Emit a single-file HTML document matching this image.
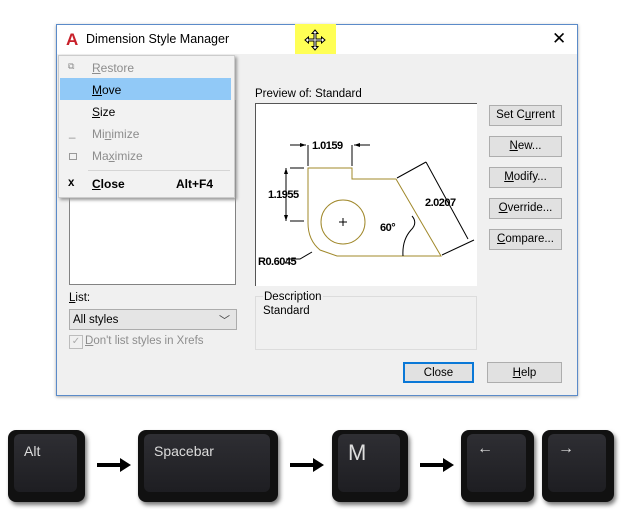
<!DOCTYPE html>
<html><head><style>
body{margin:0;width:624px;height:515px;background:#fff;position:relative;overflow:hidden;font-family:"Liberation Sans",sans-serif;font-size:11.5px;color:#000}
.a{position:absolute}
.btn{position:absolute;background:#e1e1e1;border:1px solid #adadad;text-align:center;line-height:19px;font-size:11.5px;box-sizing:border-box;height:21px}
.mi{position:absolute;left:92px;font-size:12px}
.g{color:#8d8d8d}
.key{position:absolute;background:#111;border-radius:8px;box-shadow:2px 3px 4px #777}
.key .in{position:absolute;left:6px;top:4px;right:8px;bottom:10px;background:linear-gradient(#2e2e33,#1e1e22);border-radius:6px;color:#ddd;font-size:14px;padding:9px 0 0 10px;box-sizing:border-box}
</style></head><body>
<div class="a" style="left:56px;top:24px;width:520px;height:370px;border:1px solid #5b8bc9;background:#f0f0f0;box-shadow:0 1px 3px #aaa"></div>
<div class="a" style="left:57px;top:25px;width:520px;height:29px;background:#fff"></div>
<div class="a" style="left:66px;top:31px;color:#c8202a;font-weight:bold;font-size:17px;line-height:17px">A</div>
<div class="a" style="left:86px;top:32px;font-size:12.5px">Dimension Style Manager</div>
<div class="a" style="left:295px;top:24px;width:41px;height:30px;background:#ffff55"></div>
<svg class="a" style="left:303px;top:28px" width="24" height="24" viewBox="0 0 24 24"><path d="M12 2 L15 5.5 H13 V11 H18.5 V9 L22 12 L18.5 15 V13 H13 V18.5 H15 L12 22 L9 18.5 H11 V13 H5.5 V15 L2 12 L5.5 9 V11 H11 V5.5 H9 Z" fill="#fff" stroke="#000" stroke-width="1"/></svg>
<div class="a" style="left:552px;top:29px;font-size:17px">✕</div>
<div class="a" style="left:255px;top:88px">Preview of: Standard</div>
<div class="a" style="left:69px;top:100px;width:167px;height:185px;background:#fff;border:1px solid #828282;box-sizing:border-box"></div>
<div class="a" style="left:255px;top:103px;width:222px;height:183px;background:#fff;border-left:1px solid #555;border-top:1px solid #555;box-sizing:border-box"></div>
<svg class="a" style="left:255px;top:103px" width="222" height="183" viewBox="255 103 222 183">
<g fill="none" stroke="#a0882a" stroke-width="1"><path d="M308 168 H352 V179 H396 L441 256 H337 L320 250 Q308 240 308 223 Z"/><circle cx="343" cy="222" r="22"/></g>
<g stroke="#000" stroke-width="1" fill="none"><path d="M308 145 V166 M352 145 V166 M290 145 H306 M354 145 H370 M290 168 H304 M290 221 H304 M286 168 V221 M339 222 H347 M343 218 V226 M397 178 L426 162 M442 255 L474 240 M426 162 L468 239 M312 252 L300 259 H286 M411 230 Q402 240 403 256 M411 230 Q418 223 412 216"/></g>
<g fill="#000"><path d="M306 145 L300 143 V147 Z M354 145 L360 143 V147 Z M286 168 L284 174 H288 Z M286 221 L284 215 H288 Z"/></g>
<g font-weight="bold" font-size="11" font-family="Liberation Sans" letter-spacing="-0.5"><text x="312" y="149">1.0159</text><text x="268" y="198">1.1955</text><text x="425" y="206">2.0207</text><text x="380" y="231">60°</text><text x="258" y="265">R0.6045</text></g></svg>
<div class="a" style="left:255px;top:296px;width:222px;height:54px;border:1px solid #dcdcdc;box-sizing:border-box"></div>
<div class="a" style="left:263px;top:291px;background:#f0f0f0;padding:0 1px">Description</div>
<div class="a" style="left:263px;top:305px">Standard</div>
<div class="btn" style="left:489px;top:105px;width:73px">Set C<u>u</u>rrent</div>
<div class="btn" style="left:489px;top:136px;width:73px"><u>N</u>ew...</div>
<div class="btn" style="left:489px;top:167px;width:73px"><u>M</u>odify...</div>
<div class="btn" style="left:489px;top:198px;width:73px"><u>O</u>verride...</div>
<div class="btn" style="left:489px;top:229px;width:73px"><u>C</u>ompare...</div>
<div class="btn" style="left:403px;top:362px;width:71px;border:2px solid #0a78d7;line-height:18px">Close</div>
<div class="btn" style="left:487px;top:362px;width:75px;line-height:20px"><u>H</u>elp</div>
<div class="a" style="left:69px;top:292px"><u>L</u>ist:</div>
<div class="a" style="left:69px;top:309px;width:168px;height:21px;background:#e5e5e5;border:1px solid #acacac;box-sizing:border-box;padding:4px 0 0 3px">All styles<span style="position:absolute;right:6px;top:2px;font-size:11px;color:#444">﹀</span></div>
<div class="a" style="left:69px;top:335px;width:12px;height:12px;border:1px solid #bcbcbc;color:#aaa;font-size:10px;line-height:12px;text-align:center">✓</div>
<div class="a g" style="left:85px;top:335px"><u>D</u>on't list styles in Xrefs</div>
<div class="a" style="left:58px;top:55px;width:177px;height:143px;background:#f2f2f2;border:1px solid #ccc;box-sizing:border-box;box-shadow:2px 2px 3px #999"></div>
<div class="a" style="left:60px;top:78px;width:171px;height:22px;background:#91c9f7"></div>
<div class="mi g" style="top:61px"><u>R</u>estore</div>
<div class="a g" style="left:68px;top:61px;font-size:9px">⧉</div>
<div class="mi" style="top:83px"><u>M</u>ove</div>
<div class="mi" style="top:105px"><u>S</u>ize</div>
<div class="mi g" style="top:127px">Mi<u>n</u>imize</div>
<div class="a g" style="left:69px;top:127px">_</div>
<div class="mi g" style="top:149px">Ma<u>x</u>imize</div>
<div class="a" style="left:69px;top:153px;width:6px;height:5px;border:1px solid #999"></div>
<div class="a" style="left:88px;top:170px;width:142px;height:1px;background:#d5d5d5"></div>
<div class="mi" style="top:177px;font-weight:bold"><u>C</u>lose</div>
<div class="a" style="left:176px;top:177px;font-weight:bold;font-size:12px">Alt+F4</div>
<div class="a" style="left:68px;top:177px;font-weight:bold">x</div>
<div class="key" style="left:8px;top:430px;width:77px;height:72px"><div class="in">Alt</div></div>
<div class="key" style="left:138px;top:430px;width:140px;height:72px"><div class="in">Spacebar</div></div>
<div class="key" style="left:332px;top:430px;width:76px;height:72px"><div class="in" style="font-size:22px;padding-top:6px">M</div></div>
<div class="key" style="left:461px;top:430px;width:73px;height:72px"><div class="in" style="font-size:16px;padding-top:6px">←</div></div>
<div class="key" style="left:542px;top:430px;width:72px;height:72px"><div class="in" style="font-size:16px;padding-top:6px">→</div></div>
<svg class="a" style="left:0;top:455px" width="624" height="20"><g fill="#000"><path d="M97 8 H120 V3 L131 10 L120 17 V12 H97 Z"/><path d="M290 8 H313 V3 L324 10 L313 17 V12 H290 Z"/><path d="M420 8 H443 V3 L454 10 L443 17 V12 H420 Z"/></g></svg>
</body></html>
